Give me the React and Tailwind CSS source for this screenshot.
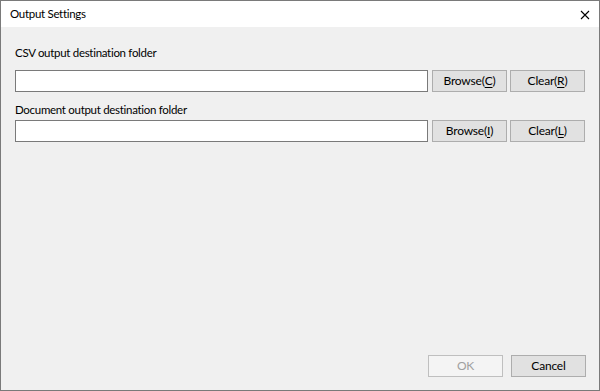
export default function App() {
  const font = { fontFamily: 'Lato, "Noto Sans", sans-serif' };
  const Btn = ({ children, disabled }) => (
    <button
      disabled={disabled}
      className={
        disabled
          ? "w-[75px] h-[22px] border border-[#bfbfbf] bg-[#f4f4f4] text-[#a0a0a0] text-[12px] leading-[20px] tracking-[-0.2px] flex items-center justify-center"
          : "w-[75px] h-[22px] border border-[#adadad] bg-[#e1e1e1] text-black text-[12px] leading-[20px] tracking-[-0.2px] flex items-center justify-center"
      }
    >
      {children}
    </button>
  );
  const U = ({ c }) => <span className="underline underline-offset-2">{c}</span>;
  return (
    <div
      className="w-[600px] h-[391px] border border-[#7a7a7a] flex flex-col bg-[#f0f0f0] text-[11.5px] tracking-[-0.3px] text-black"
      style={font}
    >
      <div className="h-[26px] bg-white flex items-center justify-between pl-[9px] pr-[9px] shrink-0">
        <span>Output Settings</span>
        <svg width="10" height="10" viewBox="0 0 10 10" className="mt-[1px]">
          <path d="M1 1 L9 9 M9 1 L1 9" stroke="#000" strokeWidth="1.1" fill="none" />
        </svg>
      </div>
      <div className="flex-1 flex flex-col pl-[14px] pr-[13px] pt-[18px] pb-[13px]">
        <div className="h-[16px] leading-[16px]">CSV output destination folder</div>
        <div className="flex mt-[9px] h-[22px]">
          <input className="w-[413px] h-[22px] border border-[#7a7a7a] bg-white outline-none" />
          <div className="ml-[4px] flex gap-[3px]">
            <Btn>Browse(<U c="C" />)</Btn>
            <Btn>Clear(<U c="R" />)</Btn>
          </div>
        </div>
        <div className="h-[16px] leading-[16px] mt-[10px]">Document output destination folder</div>
        <div className="flex mt-[2px] h-[22px]">
          <input className="w-[413px] h-[22px] border border-[#7a7a7a] bg-white outline-none" />
          <div className="ml-[4px] flex gap-[3px]">
            <Btn>Browse(<U c="I" />)</Btn>
            <Btn>Clear(<U c="L" />)</Btn>
          </div>
        </div>
        <div className="flex-1" />
        <div className="flex justify-end gap-[8px]">
          <Btn disabled>OK</Btn>
          <Btn>Cancel</Btn>
        </div>
      </div>
    </div>
  );
}
